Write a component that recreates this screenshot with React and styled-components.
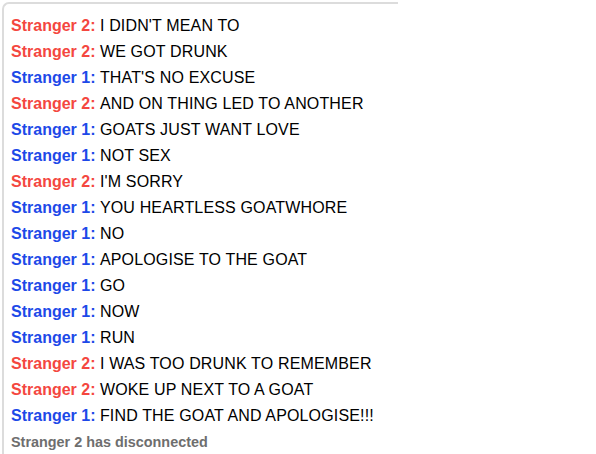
import React from "react";
import styled, { createGlobalStyle } from "styled-components";

const Global = createGlobalStyle`
  html, body { margin: 0; padding: 0; background: #fff; }
  body { font-family: "Liberation Sans", Arial, Helvetica, sans-serif; }
`;

const Page = styled.div`
  width: 596px;
  height: 454px;
  overflow: hidden;
  background: #fff;
  padding: 2px 0 0 2px;
  box-sizing: border-box;
`;

const Log = styled.div`
  width: 396px;
  height: 470px;
  box-sizing: border-box;
  border-top: 2px solid #dcdcdc;
  border-left: 2px solid #dcdcdc;
  border-top-left-radius: 7px;
  padding: 9px 0 0 7px;
  display: flex;
  flex-direction: column;
`;

const Line = styled.div`
  font-size: 16px;
  line-height: 26px;
  height: 26px;
  color: #000;
  white-space: nowrap;
`;

const Source = styled.strong`
  font-weight: bold;
  color: ${(p) => (p.$who === 1 ? "#1d49e8" : "#f4473f")};
`;

const Text = styled.span`
  letter-spacing: 0.15px;
`;

const Status = styled.div`
  font-size: 14.4px;
  font-weight: bold;
  color: #6e6e6e;
  line-height: 26px;
`;

const msgs = [
  [2, "I DIDN'T MEAN TO"],
  [2, "WE GOT DRUNK"],
  [1, "THAT'S NO EXCUSE"],
  [2, "AND ON THING LED TO ANOTHER"],
  [1, "GOATS JUST WANT LOVE"],
  [1, "NOT SEX"],
  [2, "I'M SORRY"],
  [1, "YOU HEARTLESS GOATWHORE"],
  [1, "NO"],
  [1, "APOLOGISE TO THE GOAT"],
  [1, "GO"],
  [1, "NOW"],
  [1, "RUN"],
  [2, "I WAS TOO DRUNK TO REMEMBER"],
  [2, "WOKE UP NEXT TO A GOAT"],
  [1, "FIND THE GOAT AND APOLOGISE!!!"],
];

export default function App() {
  return (
    <Page>
      <Global />
      <Log>
        {msgs.map(([who, text], i) => (
          <Line key={i}>
            <Source $who={who}>Stranger {who}:</Source> <Text>{text}</Text>
          </Line>
        ))}
        <Status>Stranger 2 has disconnected</Status>
      </Log>
    </Page>
  );
}
